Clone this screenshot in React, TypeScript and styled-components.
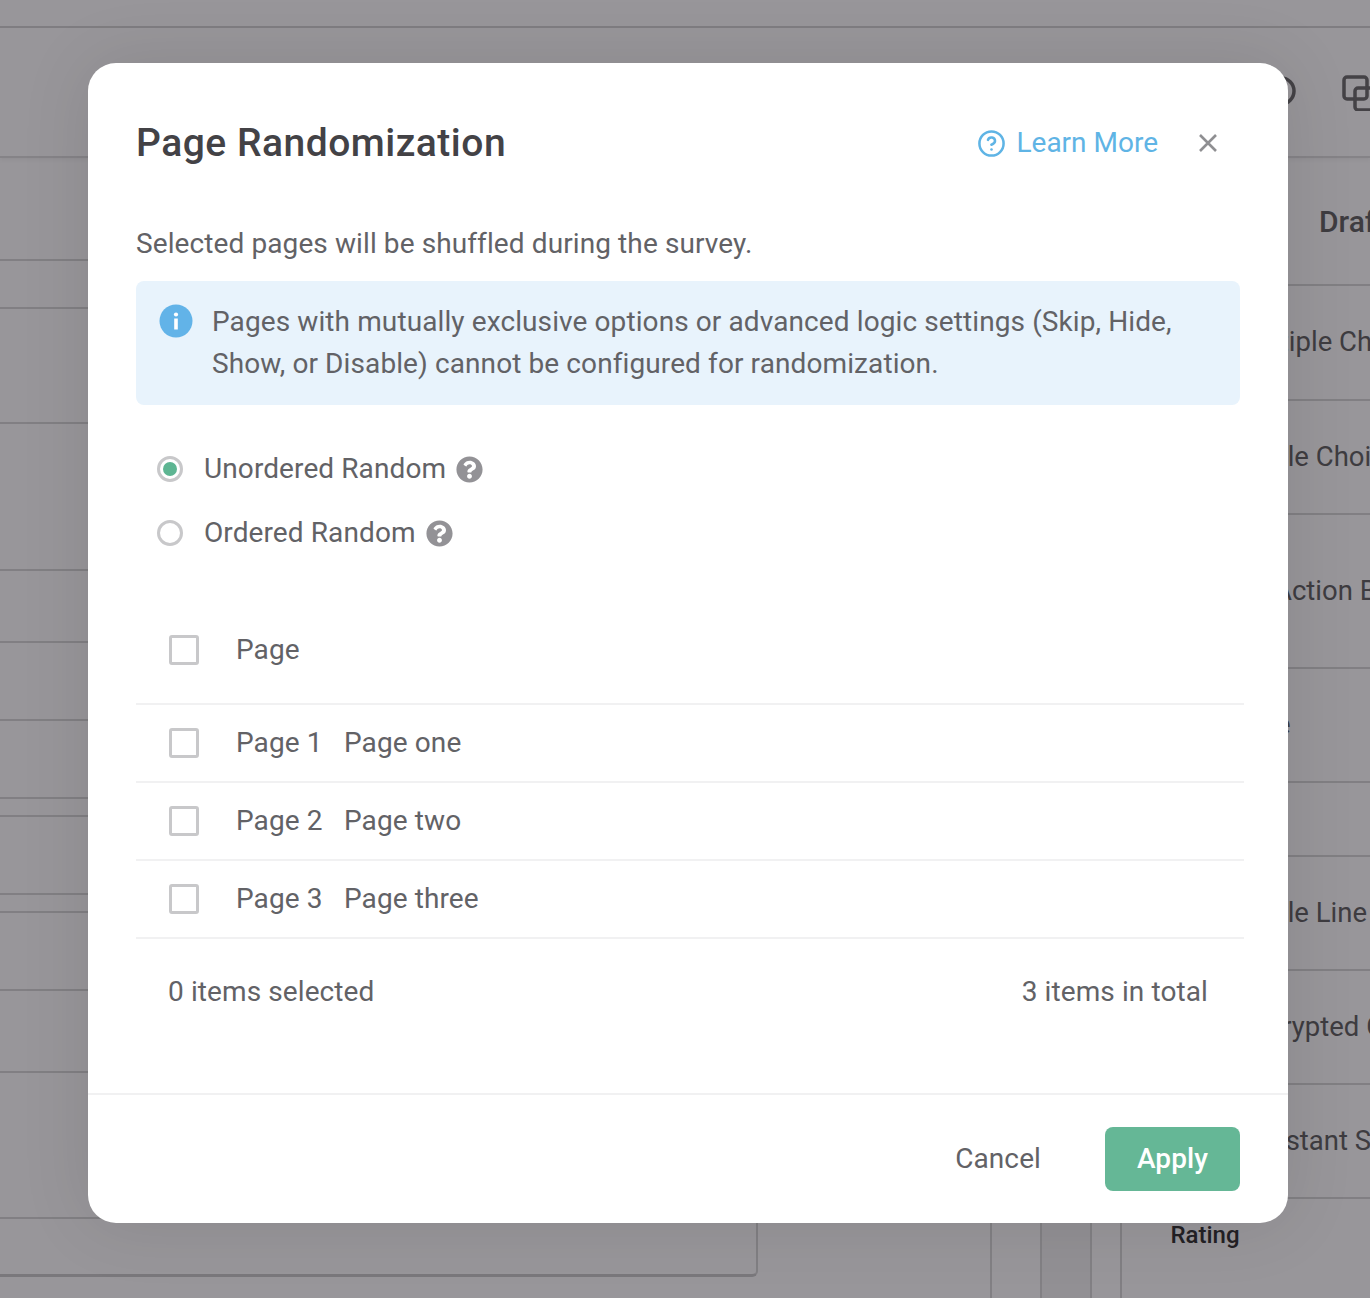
import React from "react";
import styled, { createGlobalStyle } from "styled-components";
import { CircleHelp } from "lucide-react";
import { FaQuestionCircle } from "react-icons/fa";

const GlobalStyle = createGlobalStyle`
  html, body {
    margin: 0;
    padding: 0;
    background: #fff;
    font-family: Roboto, "Liberation Sans", sans-serif;
  }
  * { box-sizing: border-box; }
`;

const canvasRows = [103, 48, 115, 147, 72, 78, 78, 18, 78, 18, 78, 82, 146, 58];
const panelRows = [
  { height: 115, label: "Multiple Choice", inset: 112 },
  { height: 114, label: "Single Choice", inset: 112 },
  { height: 154, label: "Action Button", inset: 152 },
  { height: 114, label: "Date", inset: 112 },
  { height: 74, label: "", inset: 0 },
  { height: 114, label: "Single Line", inset: 112 },
  { height: 114, label: "Encrypted Card", inset: 115 },
  { height: 114, label: "Instant Search", inset: 141 },
];
const pages = [
  { id: "Page 1", name: "Page one" },
  { id: "Page 2", name: "Page two" },
  { id: "Page 3", name: "Page three" },
];

export default function App() {
  return (
    <Screen>
      <GlobalStyle />
      <TopStrip />
      <Toolbar>
        <RingIcon />
        <CopyIcon />
      </Toolbar>
      <Workspace>
        <Canvas>
          {canvasRows.map((height, i) => (
            <CanvasRow key={i} $height={height} />
          ))}
        </Canvas>
        <Gutter $width={50} />
        <Gutter $width={50} $dark />
        <Gutter $width={30} />
        <Panel>
          <PanelTitle>Draft</PanelTitle>
          {panelRows.map((row) => (
            <PanelRow key={row.inset + row.label} $height={row.height} $inset={row.inset}>
              {row.label}
            </PanelRow>
          ))}
          <RatingRow>Rating</RatingRow>
        </Panel>
      </Workspace>

      <Backdrop>
        <Modal>
          <Header>
            <Title>Page Randomization</Title>
            <LearnMore>
              <CircleHelp size={29} strokeWidth={2.1} />
              <LearnLabel>Learn More</LearnLabel>
            </LearnMore>
            <CloseIcon />
          </Header>

          <Body>
            <Subtitle>Selected pages will be shuffled during the survey.</Subtitle>
            <InfoBox>
              <InfoIcon />
              <InfoText>
                Pages with mutually exclusive options or advanced logic settings (Skip, Hide,
                <br />
                Show, or Disable) cannot be configured for randomization.
              </InfoText>
            </InfoBox>

            <RadioGroup>
              <RadioRow>
                <Radio $checked />
                <RadioLabel>Unordered Random</RadioLabel>
                <FaQuestionCircle size={27} color="#939296" />
              </RadioRow>
              <RadioRow>
                <Radio />
                <RadioLabel>Ordered Random</RadioLabel>
                <FaQuestionCircle size={27} color="#939296" />
              </RadioRow>
            </RadioGroup>

            <TableHead>
              <Checkbox />
              <PageId>Page</PageId>
            </TableHead>
            {pages.map((page) => (
              <TableRow key={page.id}>
                <Checkbox />
                <PageId>{page.id}</PageId>
                <span>{page.name}</span>
              </TableRow>
            ))}
            <Summary>
              <span>0 items selected</span>
              <span>3 items in total</span>
            </Summary>
          </Body>

          <Footer>
            <CancelButton>Cancel</CancelButton>
            <ApplyButton>Apply</ApplyButton>
          </Footer>
        </Modal>
      </Backdrop>
    </Screen>
  );
}

function RingIcon() {
  return (
    <ToolbarSvg width="32" height="32" viewBox="0 0 32 32" $right={73}>
      <circle cx="16" cy="16" r="13" fill="none" stroke="#666" strokeWidth="3.5" />
    </ToolbarSvg>
  );
}

function CopyIcon() {
  return (
    <ToolbarSvg width="36" height="36" viewBox="0 0 36 36" $right={-8}>
      <rect x="2" y="2" width="23" height="22" rx="3" fill="none" stroke="#666" strokeWidth="3.5" />
      <rect x="13" y="13" width="23" height="22" rx="3" fill="none" stroke="#666" strokeWidth="3.5" />
    </ToolbarSvg>
  );
}

function CloseIcon() {
  return (
    <CloseSvg width="20" height="20" viewBox="0 0 20 20">
      <path d="M2 2 L18 18 M18 2 L2 18" stroke="#8f8f92" strokeWidth="2.6" fill="none" />
    </CloseSvg>
  );
}

function InfoIcon() {
  return (
    <InfoSvg width="34" height="34" viewBox="0 0 34 34">
      <circle cx="17" cy="17" r="16.5" fill="#62b3e8" />
      <circle cx="17" cy="10.5" r="2.1" fill="#fff" />
      <rect x="15.2" y="14.5" width="3.6" height="11" fill="#fff" />
    </InfoSvg>
  );
}

const Screen = styled.div`
  position: relative;
  width: 1370px;
  height: 1298px;
  overflow: hidden;
  background: #fff;
`;

const TopStrip = styled.div`
  height: 28px;
  border-bottom: 2px solid #d2d2d2;
`;

const Toolbar = styled.div`
  position: relative;
  height: 130px;
  border-bottom: 2px solid #dcdcdc;
  box-shadow: 0 2px 4px rgba(0, 0, 0, 0.06);
`;

const ToolbarSvg = styled.svg<{ $right: number }>`
  position: absolute;
  top: 47px;
  right: ${(p) => p.$right}px;
`;

const Workspace = styled.div`
  display: flex;
  height: 1140px;
`;

const Canvas = styled.div`
  width: 758px;
  height: 1119px;
  margin-right: 232px;
  border-right: 2px solid #d6d6d6;
  border-bottom: 3px solid #c8c8c8;
  border-bottom-right-radius: 6px;
`;

const CanvasRow = styled.div<{ $height: number }>`
  height: ${(p) => p.$height}px;
  border-bottom: 2px solid #d6d6d6;
  &:last-child { border-bottom: none; }
`;

const Gutter = styled.div<{ $width: number; $dark?: boolean }>`
  width: ${(p) => p.$width}px;
  border-left: 2px solid #d8d8d8;
  background: ${(p) => (p.$dark ? "#f4f4f4" : "transparent")};
`;

const Panel = styled.div`
  flex: 1;
  min-width: 0;
  overflow: hidden;
  border-left: 2px solid #d6d6d6;
  color: #5c5c5c;
  white-space: nowrap;
`;

const PanelTitle = styled.div`
  display: flex;
  align-items: center;
  height: 128px;
  padding-left: 197px;
  border-bottom: 2px solid #d6d6d6;
  font-size: 30px;
  font-weight: 500;
`;

const PanelRow = styled.div<{ $height: number; $inset: number }>`
  display: flex;
  align-items: center;
  height: ${(p) => p.$height}px;
  padding: 0 0 2px ${(p) => p.$inset}px;
  border-bottom: 2px solid #d6d6d6;
  font-size: 27.5px;
`;

const RatingRow = styled.div`
  display: flex;
  align-items: center;
  justify-content: center;
  width: 166px;
  height: 74px;
  padding-bottom: 2px;
  font-size: 24px;
  font-weight: 500;
  color: #2a2a2a;
`;

const Backdrop = styled.div`
  position: absolute;
  inset: 0;
  padding: 63px 0 0 88px;
  background: rgba(26, 23, 30, 0.45);
`;

const Modal = styled.div`
  display: flex;
  flex-direction: column;
  width: 1200px;
  height: 1160px;
  border-radius: 28px;
  background: #fff;
  box-shadow: 0 0 70px rgba(0, 0, 0, 0.1);
  color: #626266;
  font-size: 28px;
  letter-spacing: 0.1px;
`;

const Header = styled.div`
  display: flex;
  align-items: center;
  height: 160px;
  padding: 0 70px 0 48px;
`;

const Title = styled.h1`
  flex: 1;
  margin: 0;
  font-size: 39px;
  font-weight: 500;
  letter-spacing: 0.5px;
  color: #434246;
`;

const LearnMore = styled.a`
  display: flex;
  align-items: center;
  gap: 10px;
  color: #5fb4e5;
`;

const LearnLabel = styled.span`
  padding-bottom: 2px;
  letter-spacing: 0;
`;

const CloseSvg = styled.svg`
  margin-left: 40px;
`;

const Body = styled.div`
  flex: 1;
  padding: 0 48px;
`;

const Subtitle = styled.div`
  height: 58px;
  padding-top: 1px;
  line-height: 40px;
`;

const InfoBox = styled.div`
  display: flex;
  height: 124px;
  padding: 20px 23px;
  border-radius: 8px;
  background: #e8f3fc;
`;

const InfoSvg = styled.svg`
  flex-shrink: 0;
  margin: 3px 19px 0 0;
`;

const InfoText = styled.div`
  line-height: 42px;
  white-space: nowrap;
`;

const RadioGroup = styled.div`
  display: flex;
  flex-direction: column;
  gap: 24px;
  margin: 44px 0 44px 21px;
`;

const RadioRow = styled.label`
  display: flex;
  align-items: center;
  height: 40px;
  gap: 10px;
`;

const RadioLabel = styled.span`
  padding-bottom: 2px;
`;

const Radio = styled.span<{ $checked?: boolean }>`
  display: flex;
  align-items: center;
  justify-content: center;
  width: 26px;
  height: 26px;
  margin-right: 11px;
  border: 3px solid #c8c8ca;
  border-radius: 50%;
  &::after {
    content: "";
    display: ${(p) => (p.$checked ? "block" : "none")};
    width: 14px;
    height: 14px;
    border-radius: 50%;
    background: #5db592;
  }
`;

const TableRow = styled.div`
  display: flex;
  align-items: center;
  width: 1108px;
  height: 78px;
  padding-left: 33px;
  border-bottom: 2px solid #f1f1f2;
  & > span:not(:first-child) { padding-bottom: 2px; }
`;

const TableHead = styled(TableRow)`
  height: 108px;
`;

const Checkbox = styled.span`
  width: 30px;
  height: 30px;
  margin-right: 37px;
  border: 3.5px solid #c8c8ca;
  border-radius: 3px;
`;

const PageId = styled.span`
  width: 108px;
`;

const Summary = styled.div`
  display: flex;
  justify-content: space-between;
  align-items: center;
  height: 104px;
  padding: 0 32px;
`;

const Footer = styled.div`
  display: flex;
  justify-content: flex-end;
  align-items: center;
  height: 130px;
  padding-right: 48px;
  border-top: 2px solid #f1f1f2;
`;

const CancelButton = styled.button`
  margin-right: 64px;
  padding: 0 0 2px;
  border: none;
  background: none;
  color: inherit;
  font: inherit;
  letter-spacing: inherit;
`;

const ApplyButton = styled.button`
  width: 135px;
  height: 64px;
  padding: 0 0 2px;
  border: none;
  border-radius: 8px;
  background: #65b796;
  color: #fff;
  font: inherit;
  font-weight: 500;
  letter-spacing: inherit;
`;
